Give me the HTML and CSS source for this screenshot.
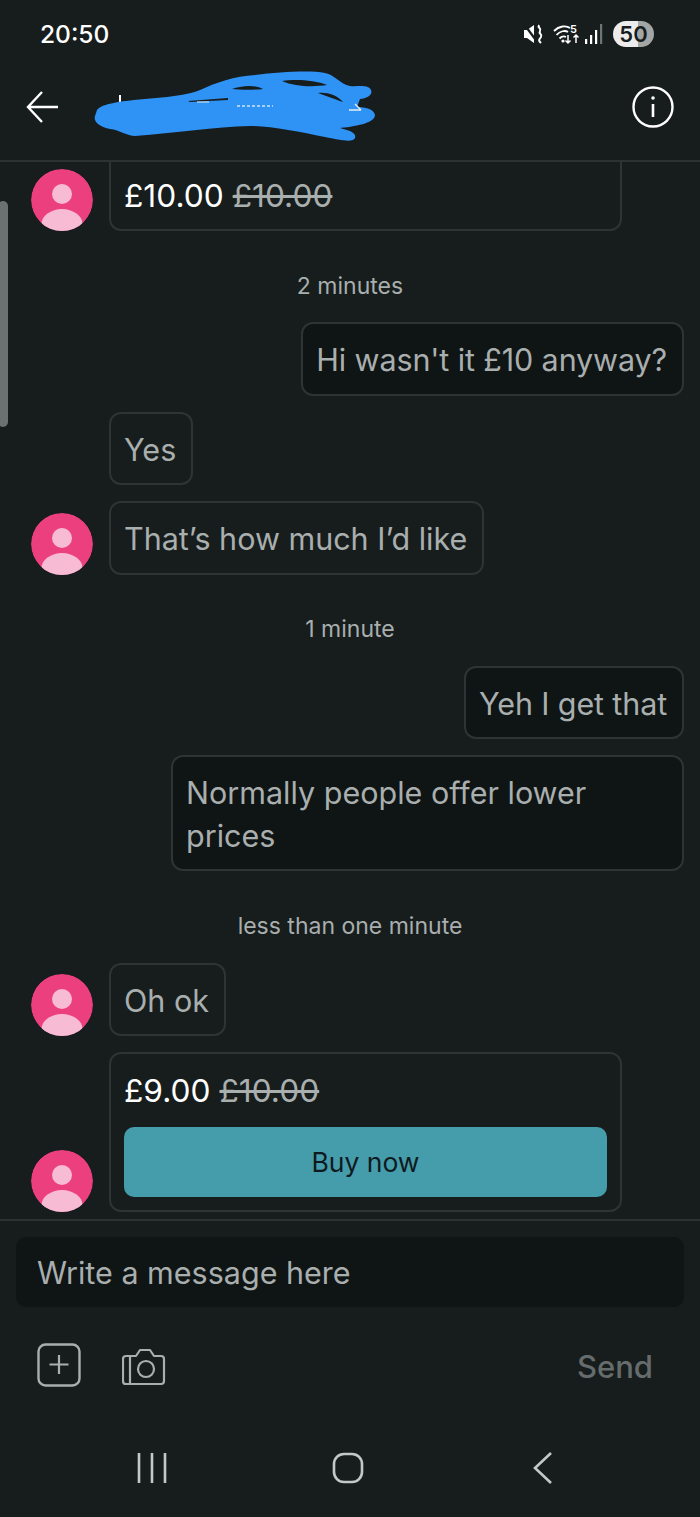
FILE: index.html
```html
<!DOCTYPE html>
<html>
    <head>
        <meta charset="UTF-8" />
        <meta name="viewport" content="width=device-width, initial-scale=1.0"/>
        <link rel="stylesheet" href="styles.css">
    </head>
    <body>
        <div class="phone">
            <div class="status">
                <span class="clock">20:50</span>
                <div class="status-icons">
                    <svg class="ic-mute" width="22" height="22" viewBox="0 0 22 22">
                        <path d="M1 7h3l7-5v18l-7-5H1z" fill="#fff"/>
                        <path d="M1 1l14 19" stroke="#171d1d" stroke-width="2.200"/>
                        <path d="M16 2c-2 3 3 3 1 6s3 3 1 6-3 3 0 6" fill="none" stroke="#fff" stroke-width="2"/>
                    </svg>
                    <svg class="ic-wifi" width="28" height="24" viewBox="0 0 28 24">
                        <path d="M1 9C6 4 13 3 17 6M3.500 13C7 9 12 8 15 10M6.500 16.500C8.500 14.500 11 14 13 15" fill="none" stroke="#fff" stroke-width="1.800"/>
                        <circle cx="10" cy="19" r="1.600" fill="#fff"/>
                        <path d="M15 13v8m-2.500-2.500 2.500 2.500 2.500-2.500M23 21v-8m-2.500 2.500 2.500-2.500 2.500 2.500" fill="none" stroke="#fff" stroke-width="1.500"/>
                        <text x="17" y="11" class="wifi-five">5</text>
                    </svg>
                    <svg class="ic-signal" width="18" height="22" viewBox="0 0 18 22">
                        <rect x="0" y="16" width="2.200" height="5" fill="#fff"/>
                        <rect x="5" y="12" width="2.200" height="9" fill="#fff"/>
                        <rect x="10" y="7" width="2.200" height="14" fill="#fff"/>
                        <rect x="15" y="1" width="2.200" height="20" fill="#6e7473"/>
                    </svg>
                    <div class="battery">50</div>
                </div>
            </div>

            <div class="topbar">
                <svg class="back" width="34" height="34" viewBox="0 0 34 34">
                    <path d="M32 17H2M16 2 2 17l14 15" fill="none" stroke="#fff" stroke-width="2.400"/>
                </svg>
                <svg class="info" width="44" height="44" viewBox="0 0 44 44">
                    <circle cx="22" cy="22" r="19.500" fill="none" stroke="#fff" stroke-width="2.400"/>
                    <circle cx="22" cy="13" r="1.800" fill="#fff"/>
                    <path d="M22 19v13" stroke="#fff" stroke-width="2.600"/>
                </svg>
                <!-- name was scribbled out in the screenshot -->
                <svg class="scribble" width="300" height="90" viewBox="0 0 300 90">
                    <path d="M35 35v9" stroke="#fff" stroke-width="2"/>
                    <path d="M12 50C16 45 24 44 33 42 60 38 95 38 115 30 130 23 150 16 170 15 195 12 225 10 240 13 250 15 255 24 265 26 272 27 283 24 286 30 288 35 282 38 275 39L272 47C280 47 289 49 290 55 290 62 275 66 255 68 262 70 272 72 270 78 268 83 255 80 240 77 215 72 185 66 165 66 130 67 90 73 50 76 42 76 35 70 25 69 15 67 8 62 10 56Z" fill="#2f92f5"/>
                    <path d="M147 29C155 26 170 24 178 29 170 30 155 30 147 29ZM197 21C210 19 230 20 242 25 230 27 210 27 197 21ZM233 33C242 32 252 35 258 42 252 40 242 36 233 33ZM103 41 143 38 143 40 105 42Z" fill="#171d1d"/>
                    <path d="M112 42h12" fill="none" stroke="#e8eef2" stroke-width="1"/>
                    <path d="M152 46h36" fill="none" stroke="#cfe2f2" stroke-width="1.400" stroke-dasharray="3 2"/>
                    <path d="M264 50h12M270 44l6 6" fill="none" stroke="#e8eef2" stroke-width="1.400"/>
                </svg>
            </div>

            <div class="chat">
                <div class="row">
                    <div class="avatar">
                        <svg viewBox="0 0 62 62"><circle cx="31" cy="31" r="31" fill="#ec3f7e"/><circle cx="31" cy="25" r="10" fill="#f7bcd3"/><ellipse cx="31" cy="55" rx="20.500" ry="15" fill="#f7bcd3"/></svg>
                    </div>
                    <div class="bubble offer offer-top">
                        <div class="price"><b>£10.00</b> <s>£10.00</s></div>
                    </div>
                </div>
                <div class="stamp">2 minutes</div>
                <div class="row row-me"><div class="bubble dark tight">Hi wasn't it £10 anyway?</div></div>
                <div class="row row-them"><div class="bubble">Yes</div></div>
                <div class="row">
                    <div class="avatar">
                        <svg viewBox="0 0 62 62"><circle cx="31" cy="31" r="31" fill="#ec3f7e"/><circle cx="31" cy="25" r="10" fill="#f7bcd3"/><ellipse cx="31" cy="55" rx="20.500" ry="15" fill="#f7bcd3"/></svg>
                    </div>
                    <div class="bubble">That’s how much I’d like</div>
                </div>
                <div class="stamp">1 minute</div>
                <div class="row row-me"><div class="bubble dark tight">Yeh I get that</div></div>
                <div class="row row-me"><div class="bubble dark wide">Normally people offer lower prices</div></div>
                <div class="stamp">less than one minute</div>
                <div class="row">
                    <div class="avatar">
                        <svg viewBox="0 0 62 62"><circle cx="31" cy="31" r="31" fill="#ec3f7e"/><circle cx="31" cy="25" r="10" fill="#f7bcd3"/><ellipse cx="31" cy="55" rx="20.500" ry="15" fill="#f7bcd3"/></svg>
                    </div>
                    <div class="bubble">Oh ok</div>
                </div>
                <div class="row">
                    <div class="avatar">
                        <svg viewBox="0 0 62 62"><circle cx="31" cy="31" r="31" fill="#ec3f7e"/><circle cx="31" cy="25" r="10" fill="#f7bcd3"/><ellipse cx="31" cy="55" rx="20.500" ry="15" fill="#f7bcd3"/></svg>
                    </div>
                    <div class="bubble offer offer-last">
                        <div class="price"><b>£9.00</b> <s>£10.00</s></div>
                        <div class="buy">Buy now</div>
                    </div>
                </div>
                <div class="scrollbar"></div>
            </div>

            <div class="composer">
                <div class="input">Write a message here</div>
                <div class="actions">
                    <svg width="44" height="44" viewBox="0 0 44 44">
                        <rect x="1.500" y="1.500" width="41" height="41" rx="7" fill="none" stroke="#a9aeae" stroke-width="2.400"/>
                        <path d="M22 12v19M12.500 21.500h19" stroke="#a9aeae" stroke-width="2.200"/>
                    </svg>
                    <svg class="camera" width="44" height="38" viewBox="0 0 44 38">
                        <path d="M8 8h6l4-6h10l4 6h7a3 3 0 0 1 3 3v22a3 3 0 0 1-3 3H4a3 3 0 0 1-3-3V11a3 3 0 0 1 3-3h4v28" fill="none" stroke="#a9aeae" stroke-width="2.200" stroke-linejoin="round"/>
                        <circle cx="24" cy="21" r="8" fill="none" stroke="#a9aeae" stroke-width="2.200"/>
                    </svg>
                    <span class="send">Send</span>
                </div>
            </div>

            <div class="navbar">
                <svg width="30" height="30" viewBox="0 0 30 30">
                    <path d="M2 0v30M15 0v30M28 0v30" stroke="#c4c8c7" stroke-width="2.600"/>
                </svg>
                <svg class="nav-home" width="32" height="32" viewBox="0 0 32 32">
                    <rect x="2" y="2" width="28" height="28" rx="10" fill="none" stroke="#c4c8c7" stroke-width="2.600"/>
                </svg>
                <svg width="22" height="32" viewBox="0 0 22 32">
                    <path d="M20 1 4 16l16 15" fill="none" stroke="#c4c8c7" stroke-width="2.600"/>
                </svg>
            </div>
        </div>
    </body>
</html>
```

FILE: styles.css
```css
* {
    box-sizing: border-box;
}
body {
    margin: 0;
    background-color: #171d1d;
    font-family: "Inter", "Liberation Sans", sans-serif;
}
.phone {
    width: 700px;
    height: 1517px;
    display: flex;
    flex-direction: column;
    overflow: hidden;
}

/* status bar */
.status {
    height: 66px;
    padding: 2px 46px 0 40px;
    display: flex;
    justify-content: space-between;
    align-items: center;
    color: #fff;
}
.clock {
    font-size: 24.5px;
    font-weight: 500;
}
.status-icons {
    display: flex;
    align-items: center;
}
.ic-wifi {
    margin-left: 8px;
}
.ic-signal {
    margin-left: 4px;
}
.wifi-five {
    font-size: 11px;
    font-weight: 600;
    fill: #fff;
}
.battery {
    width: 41px;
    height: 26px;
    margin-left: 10px;
    border-radius: 13px;
    background: linear-gradient(90deg, #ececec 0 60%, #a3a6a5 60%);
    color: #171d1d;
    font-size: 22px;
    font-weight: 600;
    line-height: 26px;
    text-align: center;
}

/* header */
.topbar {
    position: relative;
    height: 96px;
    padding: 0 25px 12px 26px;
    display: flex;
    justify-content: space-between;
    align-items: center;
    border-bottom: 2px solid #2c3232;
}
.scribble {
    position: absolute;
    left: 85px;
    top: -6px;
}

/* messages */
.chat {
    position: relative;
    flex: 1;
    padding: 0 16px 0 31px;
    display: flex;
    flex-direction: column;
    gap: 16px;
    overflow: hidden;
}
.row {
    display: flex;
    align-items: flex-end;
    gap: 16px;
}
.row-me {
    justify-content: flex-end;
}
.row-them {
    padding-left: 78px;
}
.avatar {
    width: 62px;
    height: 62px;
    flex-shrink: 0;
    border-radius: 50%;
    overflow: hidden;
}
.avatar svg {
    display: block;
    width: 62px;
    height: 62px;
}
.bubble {
    padding: 15px 15px 12px 13px;
    border: 2px solid #2e3434;
    border-radius: 12px;
    color: #a9aeae;
    font-size: 30.5px;
    line-height: 42.5px;
}
.dark {
    background-color: #0f1414;
}
.tight {
    letter-spacing: -0.12px;
}
.wide {
    width: 513px;
}
.offer {
    width: 513px;
    padding: 15px 13px 13px;
}
.offer-top {
    padding-top: 11.5px;
    padding-bottom: 12.5px;
    border-top: 0;
    border-top-left-radius: 0;
    border-top-right-radius: 0;
}
.offer-last {
    flex-shrink: 0;
}
.price {
    font-size: 31.7px;
    line-height: 43px;
    color: #a9aeae;
}
.price b {
    font-weight: 400;
    color: #fff;
}
.buy {
    margin-top: 15px;
    height: 70px;
    border-radius: 10px;
    background-color: #459cab;
    color: #0f1a1e;
    font-size: 26.5px;
    line-height: 71px;
    text-align: center;
}
.stamp {
    margin: 23.5px 0 5.7px -15px;
    color: #a9aeae;
    font-size: 23px;
    line-height: 30px;
    text-align: center;
}
.scrollbar {
    position: absolute;
    left: -2px;
    top: 39px;
    width: 10px;
    height: 226px;
    border-radius: 6px;
    background-color: #6b7070;
}

/* message box */
.composer {
    height: 200px;
    padding: 16px 16px 0 16px;
    border-top: 2px solid #2c3232;
}
.input {
    height: 70px;
    padding-left: 21px;
    border-radius: 10px;
    background-color: #0f1414;
    color: #a9aeae;
    font-size: 30.5px;
    line-height: 72px;
}
.actions {
    margin-top: 36px;
    padding: 0 31px 0 21px;
    display: flex;
    align-items: center;
    gap: 41px;
}
.camera {
    margin-top: 4px;
}
.send {
    margin-left: auto;
    margin-top: 2px;
    color: #666c6c;
    font-size: 31px;
    font-weight: 500;
}

/* android nav */
.navbar {
    height: 98px;
    padding: 0 147px 0 137px;
    display: flex;
    justify-content: space-between;
    align-items: center;
}
.nav-home {
    margin-left: -3px;
}
```
